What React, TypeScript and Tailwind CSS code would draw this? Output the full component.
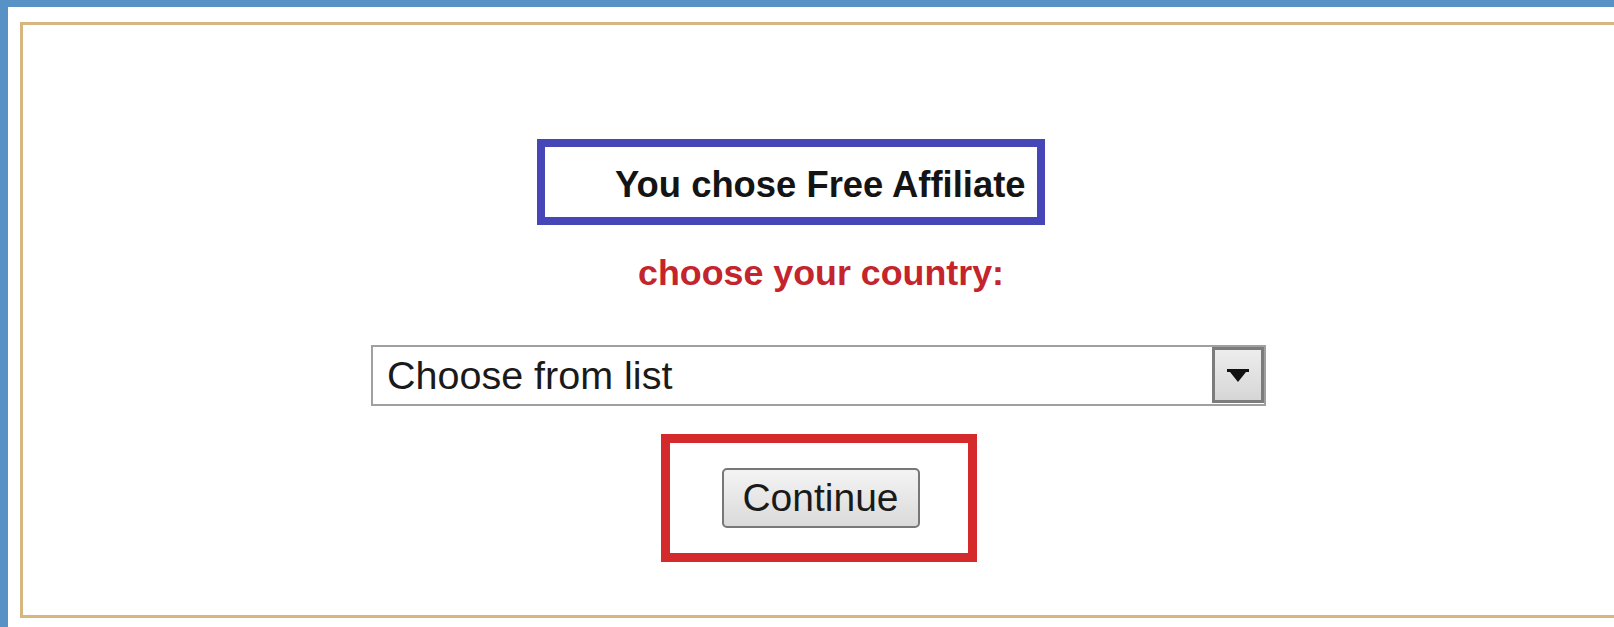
import React from "react";

const font = { fontFamily: '"Liberation Sans", Arial, sans-serif' };

function DropArrow() {
  return (
    <svg width="22" height="13" viewBox="0 0 22 13" aria-hidden="true">
      <path d="M0 0 H22 V3 H19 L11 13 L3 3 H0 Z" fill="#111" />
    </svg>
  );
}

export default function App() {
  return (
    <div
      className="w-[1614px] h-[627px] bg-[#5891c6] pt-[7px] pl-[8px] flex overflow-hidden"
      style={font}
    >
      <div className="flex-1 bg-white pt-[15px] pl-[12px] pb-[9px] flex">
        <div className="flex-1 border-[3px] border-r-0 border-[#d8b680] flex flex-col items-center pt-[114px]">
          {/* selected plan */}
          <div className="w-[508px] h-[86px] border-[8px] border-[#4646b6] ml-[-55px] pl-[70px] pt-[18px]">
            <span className="block text-[36.4px] leading-[40px] font-bold text-[#141414] whitespace-nowrap">
              You chose Free Affiliate
            </span>
          </div>

          <div className="mt-[28px] text-[35.8px] leading-[40px] font-bold text-[#c4242c] whitespace-nowrap ml-[5px]">
            choose your country:
          </div>

          {/* country picker */}
          <div className="mt-[52px] w-[895px] h-[61px] border-2 border-[#a0a0a0] flex items-stretch bg-white">
            <div className="flex-1 pl-[14px] text-[39.5px] leading-[57px] text-[#1a1a1a] whitespace-nowrap">
              Choose from list
            </div>
            <div className="w-[52px] border-[3px] border-[#7c7c7c] bg-gradient-to-b from-[#ededed] to-[#d6d6d6] flex items-center justify-center mb-[1px]">
              <DropArrow />
            </div>
          </div>

          <div className="mt-[28px] w-[316px] h-[128px] border-[9px] border-[#d42a2c] flex items-center justify-center">
            <button className="w-[198px] h-[60px] ml-[4px] border-2 border-[#777777] rounded-[5px] bg-gradient-to-b from-[#f4f4f4] to-[#dadada] text-[39px] leading-[56px] text-[#1a1a1a]">
              Continue
            </button>
          </div>
        </div>
      </div>
    </div>
  );
}
